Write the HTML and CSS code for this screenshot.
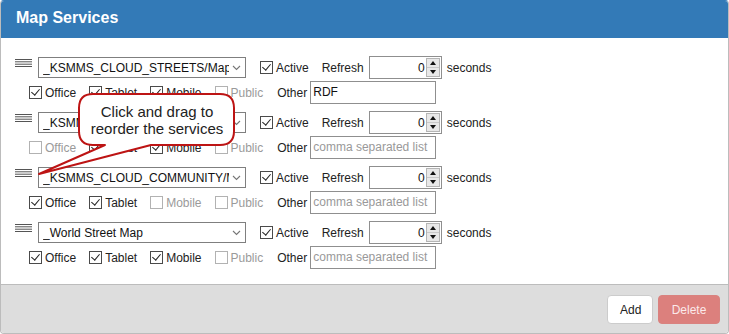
FILE: index.html
```html
<!DOCTYPE html>
<html>

<head>
    <title>Map Services</title>
    <link rel="stylesheet" href="styles.css">
</head>

<body>
    <div class="panel">
        <div class="panelHeading">Map Services</div>

        <div class="panelBody">
            <!-- service 1 -->
            <div class="service">
                <div class="lineTop">
                    <svg class="handle" width="17" height="10" viewBox="0 0 17 10"><path d="M0 1.5H17M0 3.8H17M0 6.2H17M0 8.5H17" stroke="#555" stroke-width="1"/></svg>
                    <div class="select"><span class="selText">_KSMMS_CLOUD_STREETS/MapServer</span><svg class="chevron" width="9" height="6" viewBox="0 0 9 6"><path d="M1 1L4.5 4.5L8 1" fill="none" stroke="#777" stroke-width="1.1"/></svg></div>
                    <span class="check on"><span class="box"></span>Active</span>
                    <span class="label refresh">Refresh</span>
                    <div class="spin"><span class="num">0</span><span class="arrows"><span class="up"></span><span class="down"></span></span></div>
                    <span class="label secs">seconds</span>
                </div>
                <div class="lineBottom">
                    <span class="check on"><span class="box"></span>Office</span>
                    <span class="check on"><span class="box"></span>Tablet</span>
                    <span class="check on"><span class="box"></span>Mobile</span>
                    <span class="check off"><span class="box"></span>Public</span>
                    <span class="label other">Other</span>
                    <div class="textInput">RDF</div>
                </div>
            </div>

            <!-- service 2 -->
            <div class="service">
                <div class="lineTop">
                    <svg class="handle" width="17" height="10" viewBox="0 0 17 10"><path d="M0 1.5H17M0 3.8H17M0 6.2H17M0 8.5H17" stroke="#555" stroke-width="1"/></svg>
                    <div class="select"><span class="selText">_KSMMS_CLOUD_IMAGERY/MapServer</span><svg class="chevron" width="9" height="6" viewBox="0 0 9 6"><path d="M1 1L4.5 4.5L8 1" fill="none" stroke="#777" stroke-width="1.1"/></svg></div>
                    <span class="check on"><span class="box"></span>Active</span>
                    <span class="label refresh">Refresh</span>
                    <div class="spin"><span class="num">0</span><span class="arrows"><span class="up"></span><span class="down"></span></span></div>
                    <span class="label secs">seconds</span>
                </div>
                <div class="lineBottom">
                    <span class="check off"><span class="box"></span>Office</span>
                    <span class="check on"><span class="box"></span>Tablet</span>
                    <span class="check on"><span class="box"></span>Mobile</span>
                    <span class="check off"><span class="box"></span>Public</span>
                    <span class="label other">Other</span>
                    <div class="textInput empty">comma separated list</div>
                </div>
            </div>

            <!-- service 3 -->
            <div class="service">
                <div class="lineTop">
                    <svg class="handle" width="17" height="10" viewBox="0 0 17 10"><path d="M0 1.5H17M0 3.8H17M0 6.2H17M0 8.5H17" stroke="#555" stroke-width="1"/></svg>
                    <div class="select"><span class="selText">_KSMMS_CLOUD_COMMUNITY/MapServer</span><svg class="chevron" width="9" height="6" viewBox="0 0 9 6"><path d="M1 1L4.5 4.5L8 1" fill="none" stroke="#777" stroke-width="1.1"/></svg></div>
                    <span class="check on"><span class="box"></span>Active</span>
                    <span class="label refresh">Refresh</span>
                    <div class="spin"><span class="num">0</span><span class="arrows"><span class="up"></span><span class="down"></span></span></div>
                    <span class="label secs">seconds</span>
                </div>
                <div class="lineBottom">
                    <span class="check on"><span class="box"></span>Office</span>
                    <span class="check on"><span class="box"></span>Tablet</span>
                    <span class="check off"><span class="box"></span>Mobile</span>
                    <span class="check off"><span class="box"></span>Public</span>
                    <span class="label other">Other</span>
                    <div class="textInput empty">comma separated list</div>
                </div>
            </div>

            <!-- service 4 -->
            <div class="service">
                <div class="lineTop">
                    <svg class="handle" width="17" height="10" viewBox="0 0 17 10"><path d="M0 1.5H17M0 3.8H17M0 6.2H17M0 8.5H17" stroke="#555" stroke-width="1"/></svg>
                    <div class="select"><span class="selText">_World Street Map</span><svg class="chevron" width="9" height="6" viewBox="0 0 9 6"><path d="M1 1L4.5 4.5L8 1" fill="none" stroke="#777" stroke-width="1.1"/></svg></div>
                    <span class="check on"><span class="box"></span>Active</span>
                    <span class="label refresh">Refresh</span>
                    <div class="spin"><span class="num">0</span><span class="arrows"><span class="up"></span><span class="down"></span></span></div>
                    <span class="label secs">seconds</span>
                </div>
                <div class="lineBottom">
                    <span class="check on"><span class="box"></span>Office</span>
                    <span class="check on"><span class="box"></span>Tablet</span>
                    <span class="check on"><span class="box"></span>Mobile</span>
                    <span class="check off"><span class="box"></span>Public</span>
                    <span class="label other">Other</span>
                    <div class="textInput empty">comma separated list</div>
                </div>
            </div>
        </div>

        <div class="panelFooter">
            <button class="btn add">Add</button>
            <button class="btn delete">Delete</button>
        </div>

        <!-- Drag hint bubble -->
        <svg class="bubble" width="240" height="180" viewBox="0 0 240 180">
            <path d="M92 93H219Q233 93 233 107V130Q233 144 219 144H150L38 173L104 144H92Q78 144 78 130V107Q78 93 92 93Z" fill="#fff" stroke="#bd1414" stroke-width="2" stroke-linejoin="round"/>
        </svg>
        <div class="bubbleText">Click and drag to<br>reorder the services</div>
    </div>
</body>

</html>
```

FILE: styles.css
```css
html, body {
    margin: 0;
    padding: 0;
}

body {
    font-family: 'Liberation Sans', Arial, sans-serif;
    font-size: 12px;
    color: #222;
    background-color: #fff;
}

.panel {
    position: relative;
    width: 727px;
    border: 1px solid #bcbcbc;
    border-top-color: #337ab7;
    border-radius: 4px;
    overflow: hidden;
}

.panelHeading {
    height: 37px;
    line-height: 34px;
    padding: 0 15px;
    background-color: #337ab7;
    color: #fff;
    font-size: 16px;
    font-weight: bold;
}

.panelBody {
    padding: 18px 15px 15px 14px;
}

.service {
    margin-bottom: 7px;
}

.service:last-child {
    margin-bottom: 0;
}

.lineTop {
    display: flex;
    align-items: center;
    height: 23px;
}

.lineBottom {
    display: flex;
    align-items: center;
    height: 23px;
    margin-top: 2px;
    padding-left: 14px;
}

.handle {
    align-self: flex-start;
    margin-top: 2px;
    margin-right: 6px;
    flex-shrink: 0;
}

/* fake select box */
.select {
    box-sizing: border-box;
    display: flex;
    align-items: center;
    width: 208px;
    height: 21px;
    padding: 0 4px;
    border: 1px solid #7f7f7f;
    color: #111;
    margin-right: 14px;
}

.selText {
    flex-grow: 1;
    min-width: 0;
    white-space: nowrap;
    overflow: hidden;
}

.chevron {
    flex-shrink: 0;
    margin-left: 3px;
    margin-top: 1px;
}

/* checkboxes */
.check {
    display: inline-flex;
    align-items: center;
    margin-right: 13px;
    white-space: nowrap;
}

.check .box {
    position: relative;
    box-sizing: border-box;
    width: 13px;
    height: 13px;
    margin-right: 3px;
    border: 1px solid #4a4a4a;
    background-color: #fff;
}

.check.on .box::after {
    content: '';
    position: absolute;
    left: 3px;
    top: 0px;
    width: 4px;
    height: 7px;
    border-right: 1.5px solid #222;
    border-bottom: 1.5px solid #222;
    transform: rotate(40deg);
}

.check.off {
    color: #9a9a9a;
}

.check.off .box {
    border-color: #b2b2b2;
}

.label.refresh {
    margin-right: 5px;
}

.label.secs {
    margin-left: 5px;
}

.label.other {
    margin-left: 1px;
    margin-right: 3px;
}

/* number spinner */
.spin {
    box-sizing: border-box;
    display: flex;
    align-items: center;
    width: 73px;
    height: 23px;
    border: 1px solid #8f8f8f;
    padding: 1px 1px 1px 0;
}

.spin .num {
    flex-grow: 1;
    text-align: right;
    padding-right: 1px;
    color: #111;
}

.spin .arrows {
    display: flex;
    flex-direction: column;
    width: 14px;
    height: 19px;
    border: 1px solid #b5b5b5;
    box-sizing: border-box;
    background-color: #e8e8e8;
}

.spin .up,
.spin .down {
    flex: 1;
    display: flex;
    align-items: center;
    justify-content: center;
}

.spin .up {
    border-bottom: 1px solid #c9c9c9;
}

.spin .up::after {
    content: '';
    border-left: 3px solid transparent;
    border-right: 3px solid transparent;
    border-bottom: 4px solid #111;
}

.spin .down::after {
    content: '';
    border-left: 3px solid transparent;
    border-right: 3px solid transparent;
    border-top: 4px solid #111;
}

/* text input */
.textInput {
    box-sizing: border-box;
    width: 126px;
    height: 23px;
    line-height: 21px;
    padding: 0 2px;
    border: 1px solid #8f8f8f;
    color: #111;
    white-space: nowrap;
    overflow: hidden;
}

.textInput.empty {
    color: #999;
}

.panelFooter {
    display: flex;
    justify-content: flex-end;
    gap: 5px;
    padding: 10px 8px 9px 10px;
    background-color: #dddddd;
    border-top: 1px solid #bcbcbc;
}

.btn {
    height: 29px;
    padding: 0 12px;
    border-radius: 4px;
    font-family: 'Liberation Sans', Arial, sans-serif;
    font-size: 12px;
    cursor: pointer;
}

.btn.add {
    width: 46px;
    background-color: #fff;
    border: 1px solid #cccccc;
    color: #222;
}

.btn.delete {
    width: 62px;
    background-color: #dc807d;
    border: 1px solid #d9827f;
    color: #fbeaea;
}

/* drag hint */
.bubble {
    position: absolute;
    left: 0;
    top: 0;
}

.bubbleText {
    position: absolute;
    left: 78px;
    top: 102px;
    width: 156px;
    text-align: center;
    font-size: 15px;
    line-height: 17px;
    color: #222;
}
```
